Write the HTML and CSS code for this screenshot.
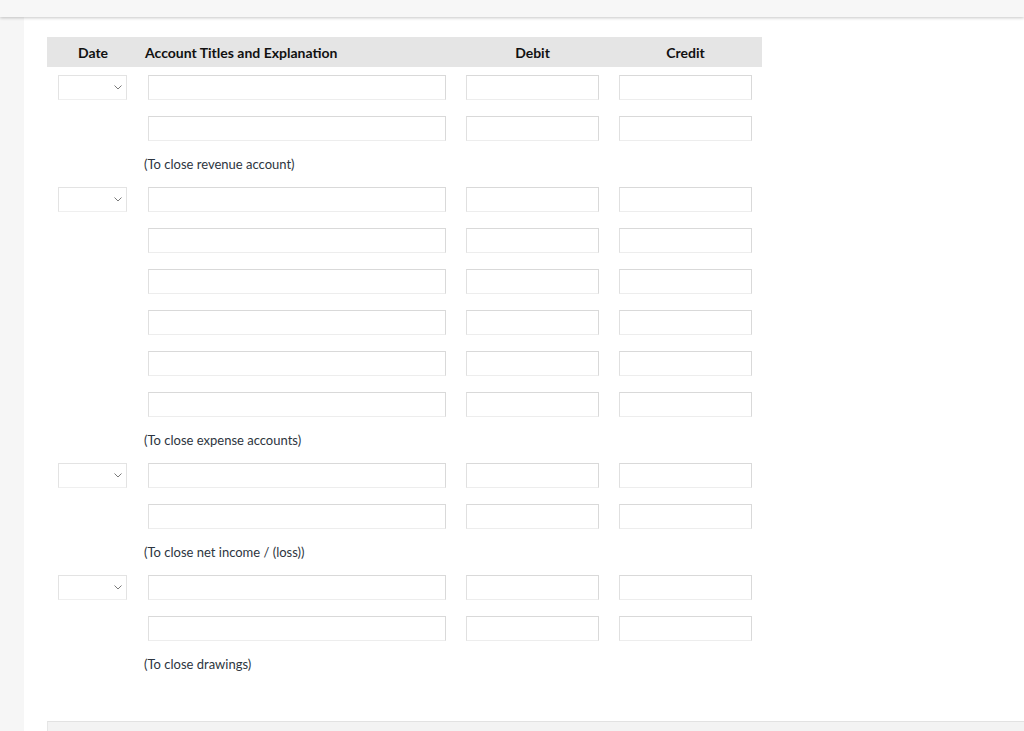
FILE: index.html
```html
<!DOCTYPE html>
<html lang="en">
<head>
<meta charset="utf-8">
<title>Closing entries</title>
<link rel="stylesheet" href="styles.css">
</head>
<body>
<div class="topbar"></div>
<div class="page">
  <div class="sidebar"></div>
  <div class="main">
    <div class="journal">
      <div class="grid head">
        <div class="h-date">Date</div>
        <div class="h-acct">Account Titles and Explanation</div>
        <div class="h-num">Debit</div>
        <div class="h-num">Credit</div>
      </div>

      <div class="entries">
        <div class="grid row">
          <div class="select"><svg width="8" height="5" viewBox="0 0 8 5"><path d="M0.5 0.5 L4 4 L7.5 0.5" fill="none" stroke="#7a7a7a" stroke-width="1"/></svg></div>
          <input class="field" type="text"><input class="field" type="text"><input class="field" type="text">
        </div>
        <div class="grid row">
          <div></div>
          <input class="field" type="text"><input class="field" type="text"><input class="field" type="text">
        </div>
        <div class="note">(To close revenue account)</div>

        <div class="grid row">
          <div class="select"><svg width="8" height="5" viewBox="0 0 8 5"><path d="M0.5 0.5 L4 4 L7.5 0.5" fill="none" stroke="#7a7a7a" stroke-width="1"/></svg></div>
          <input class="field" type="text"><input class="field" type="text"><input class="field" type="text">
        </div>
        <div class="grid row">
          <div></div>
          <input class="field" type="text"><input class="field" type="text"><input class="field" type="text">
        </div>
        <div class="grid row">
          <div></div>
          <input class="field" type="text"><input class="field" type="text"><input class="field" type="text">
        </div>
        <div class="grid row">
          <div></div>
          <input class="field" type="text"><input class="field" type="text"><input class="field" type="text">
        </div>
        <div class="grid row">
          <div></div>
          <input class="field" type="text"><input class="field" type="text"><input class="field" type="text">
        </div>
        <div class="grid row">
          <div></div>
          <input class="field" type="text"><input class="field" type="text"><input class="field" type="text">
        </div>
        <div class="note">(To close expense accounts)</div>

        <div class="grid row">
          <div class="select"><svg width="8" height="5" viewBox="0 0 8 5"><path d="M0.5 0.5 L4 4 L7.5 0.5" fill="none" stroke="#7a7a7a" stroke-width="1"/></svg></div>
          <input class="field" type="text"><input class="field" type="text"><input class="field" type="text">
        </div>
        <div class="grid row">
          <div></div>
          <input class="field" type="text"><input class="field" type="text"><input class="field" type="text">
        </div>
        <div class="note">(To close net income / (loss))</div>

        <div class="grid row">
          <div class="select"><svg width="8" height="5" viewBox="0 0 8 5"><path d="M0.5 0.5 L4 4 L7.5 0.5" fill="none" stroke="#7a7a7a" stroke-width="1"/></svg></div>
          <input class="field" type="text"><input class="field" type="text"><input class="field" type="text">
        </div>
        <div class="grid row">
          <div></div>
          <input class="field" type="text"><input class="field" type="text"><input class="field" type="text">
        </div>
        <div class="note">(To close drawings)</div>
      </div>
    </div>
    <div class="footer-panel"></div>
  </div>
</div>
</body>
</html>
```

FILE: styles.css
```css
html, body {
  margin: 0;
  padding: 0;
  background: #ffffff;
  font-family: Lato, "Open Sans", Arial, sans-serif;
}

.topbar {
  height: 17px;
  background: #f7f7f7;
  box-shadow: 0 1px 3px rgba(0, 0, 0, 0.22);
  position: relative;
  z-index: 2;
}

.page {
  display: flex;
  min-height: 714px;
}

.sidebar {
  width: 24px;
  flex: none;
  background: #f6f6f6;
}

.main {
  flex: 1;
  padding: 20px 0 0 23px;
  display: flex;
  flex-direction: column;
}

.journal {
  width: 715px;
}

.grid {
  display: grid;
  grid-template-columns: 81px 298px 133px 133px;
  column-gap: 20px;
  padding-right: 10px;
}

.head {
  height: 30px;
  align-items: center;
  background: #e5e5e5;
  font-weight: 700;
  font-size: 14px;
  color: #111;
}

.h-date {
  padding-left: 11px;
  text-align: center;
}

.h-acct {
  margin-left: -3px;
}

.h-num {
  text-align: center;
}

.entries {
  display: flex;
  flex-direction: column;
  gap: 16px;
  padding-top: 8px;
}

.row {
  height: 25px;
}

.row:nth-last-child(2) {
  margin-bottom: 0;
}

.field {
  box-sizing: border-box;
  height: 25px;
  width: 100%;
  margin: 0;
  padding: 0 4px;
  border: 1px solid #d9d9d9;
  border-bottom-color: #ededed;
  border-left-color: #e0e0e0;
  background: #fff;
  border-radius: 0;
  font: inherit;
}

.select {
  box-sizing: border-box;
  margin-left: 11px;
  width: 69px;
  height: 25px;
  border: 1px solid #e3e3e3;
  border-bottom-color: #efefef;
  display: flex;
  align-items: center;
  justify-content: flex-end;
  padding-right: 4px;
  padding-bottom: 1px;
}

.select svg {
  display: block;
}

.note {
  margin-left: 97px;
  font-size: 13px;
  line-height: 14px;
  height: 14px;
  color: #2d3540;
}

.footer-panel {
  margin-top: 50px;
  height: 10px;
  background: #f3f3f3;
  border-top: 1px solid #e2e2e2;
  border-left: 1px solid #e6e6e6;
}
```
